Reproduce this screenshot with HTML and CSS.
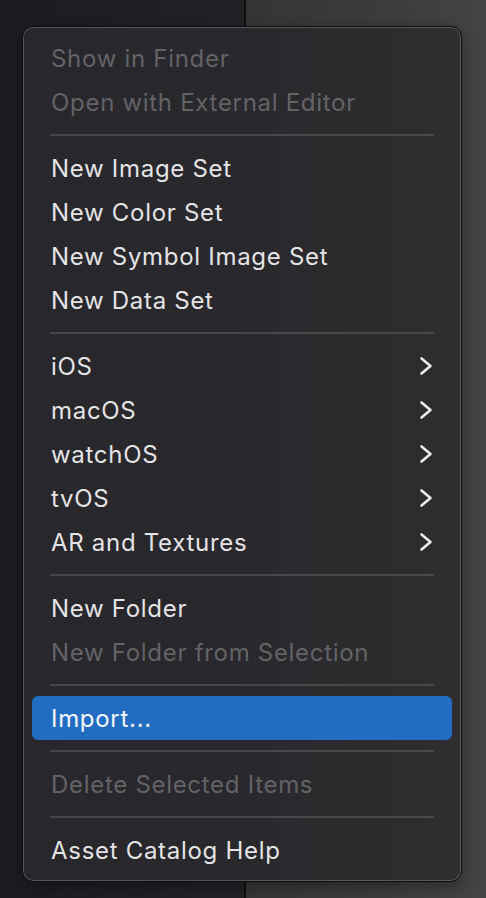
FILE: index.html
```html
<!DOCTYPE html>
<html>
<head>
<meta charset="utf-8">
<link rel="stylesheet" href="styles.css">
</head>
<body>
<div class="desk">
  <div class="pane-left"></div>
  <div class="pane-divider"></div>
  <div class="pane-right"></div>
</div>
<div class="menu">
  <div class="item disabled">Show in Finder</div>
  <div class="item disabled">Open with External Editor</div>
  <div class="sep"></div>
  <div class="item">New Image Set</div>
  <div class="item">New Color Set</div>
  <div class="item">New Symbol Image Set</div>
  <div class="item">New Data Set</div>
  <div class="sep"></div>
  <div class="item sub">iOS<svg class="chev" viewBox="0 0 14 20"><path d="M2.5 2.5 L11.5 10 L2.5 17.5"/></svg></div>
  <div class="item sub">macOS<svg class="chev" viewBox="0 0 14 20"><path d="M2.5 2.5 L11.5 10 L2.5 17.5"/></svg></div>
  <div class="item sub">watchOS<svg class="chev" viewBox="0 0 14 20"><path d="M2.5 2.5 L11.5 10 L2.5 17.5"/></svg></div>
  <div class="item sub">tvOS<svg class="chev" viewBox="0 0 14 20"><path d="M2.5 2.5 L11.5 10 L2.5 17.5"/></svg></div>
  <div class="item sub">AR and Textures<svg class="chev" viewBox="0 0 14 20"><path d="M2.5 2.5 L11.5 10 L2.5 17.5"/></svg></div>
  <div class="sep"></div>
  <div class="item">New Folder</div>
  <div class="item disabled">New Folder from Selection</div>
  <div class="sep"></div>
  <div class="item selected">Import...</div>
  <div class="sep"></div>
  <div class="item disabled">Delete Selected Items</div>
  <div class="sep"></div>
  <div class="item">Asset Catalog Help</div>
</div>
</body>
</html>
```
FILE: styles.css
```css
html, body {
  margin: 0;
  padding: 0;
  height: 100%;
  overflow: hidden;
}
body {
  background: #1e1d22;
  font-family: "Inter", "Noto Sans", sans-serif;
}
.desk {
  display: flex;
  height: 898px;
}
.pane-left {
  width: 244px;
  background: linear-gradient(90deg, #1c1b20 0%, #222126 100%);
}
.pane-divider {
  width: 2px;
  background: #0f0f11;
}
.pane-right {
  flex: 1;
  background: linear-gradient(90deg, #353535 0%, #3c3c3c 60%, #444444 100%);
}
.menu {
  position: absolute;
  left: 22px;
  top: 26px;
  width: 438px;
  padding: 9px 0;
  border: 1px solid #0c0c0e;
  border-radius: 11px;
  box-shadow: inset 0 0 0 1px rgba(255, 255, 255, 0.22), 0 4px 14px rgba(0, 0, 0, 0.35);
  background: linear-gradient(90deg, #28272b 0%, #29282c 50%, #2e2e30 100%);
}
.item {
  height: 44px;
  margin: 0 9px;
  padding: 0 19px;
  display: flex;
  align-items: center;
  justify-content: space-between;
  font-size: 24px;
  letter-spacing: 0.7px;
  color: #e4e4e6;
  border-radius: 6px;
}
.item.disabled {
  color: #636366;
}
.item.selected {
  background: #226cc2;
  color: #f4f7fb;
}
.sep {
  height: 22px;
  margin: 0 27px;
  display: flex;
  align-items: center;
}
.sep::before {
  content: "";
  flex: 1;
  height: 2px;
  background: #48484b;
}
.chev {
  width: 14px;
  height: 20px;
  margin-right: 0;
}
.chev path {
  fill: none;
  stroke: #ececee;
  stroke-width: 2.6;
  stroke-linecap: round;
  stroke-linejoin: round;
}
```
